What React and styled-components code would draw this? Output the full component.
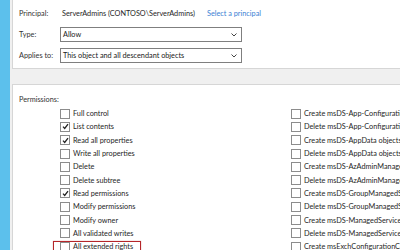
import React from "react";
import styled, { createGlobalStyle } from "styled-components";

const Global = createGlobalStyle`
  html, body {
    margin: 0;
    padding: 0;
    background: #f0f0f0;
    overflow: hidden;
  }
  body {
    font-family: Lato, "Noto Sans", sans-serif;
    font-size: 7.3px;
    color: #262626;
  }
`;

const Screen = styled.div`
  display: flex;
  width: 400px;
  height: 250px;
  overflow: hidden;
`;

const Strip = styled.div`
  width: 10px;
  flex: none;
  background: #5cc0ec;
`;

const Content = styled.div`
  flex: 1;
  padding-left: 2px;
  display: flex;
  flex-direction: column;
  min-width: 0;
`;

const Panel = styled.div`
  background: #ffffff;
  border: 1px solid #d6d6d6;
  border-right: none;
  border-top: ${(p) => (p.$first ? "none" : "1px solid #d6d6d6")};
  margin-top: ${(p) => (p.$first ? "0" : "15px")};
  padding: ${(p) => (p.$first ? "6px 0 5px 6px" : "8px 0 0 6px")};
  flex: ${(p) => (p.$first ? "none" : "1")};
`;

const FormGrid = styled.div`
  display: grid;
  grid-template-columns: 41px auto;
  grid-auto-rows: 15px;
  row-gap: 6px;
  align-items: center;
`;

const Label = styled.div`
  color: #333333;
  white-space: nowrap;
`;

const Value = styled.div`
  display: flex;
  align-items: center;
  gap: 12px;
  white-space: nowrap;
  padding-left: 2px;
`;

const Link = styled.span`
  color: #3b7fd4;
`;

const Select = styled.div`
  width: 174px;
  height: 13px;
  border: 1px solid #7f7f7f;
  display: flex;
  align-items: center;
  justify-content: space-between;
  padding: 0 4px 0 2px;
  color: #1a1a1a;
  white-space: nowrap;
`;

const Chevron = () => (
  <svg width="6" height="4" viewBox="0 0 6 4">
    <path d="M0.5 0.5 L3 3 L5.5 0.5" fill="none" stroke="#444" strokeWidth="1" />
  </svg>
);

const SectionTitle = styled.div`
  color: #333333;
  height: 13px;
  line-height: 13px;
  margin-bottom: 1px;
`;

const Columns = styled.div`
  display: grid;
  grid-template-columns: 231px 200px;
  margin-left: 41px;
`;

const List = styled.div`
  display: flex;
  flex-direction: column;
`;

const Row = styled.div`
  position: relative;
  height: 13.3px;
  display: flex;
  align-items: center;
  gap: 3px;
  white-space: nowrap;

  &::after {
    content: "";
    display: ${(p) => (p.$highlight ? "block" : "none")};
    position: absolute;
    left: -7px;
    top: 1px;
    width: 86px;
    height: 16px;
    border: 1px solid #b5262a;
    box-shadow: 0 0 1px rgba(181, 38, 42, 0.5);
  }
`;

const Box = styled.span`
  width: 8px;
  height: 8px;
  flex: none;
  border: 1px solid #8c8c8c;
  background: #ffffff;
  display: flex;
  align-items: center;
  justify-content: center;
`;

const Check = () => (
  <svg width="7" height="7" viewBox="0 0 7 7">
    <path d="M1 3.6 L2.7 5.4 L6 1.2" fill="none" stroke="#222" strokeWidth="1.3" />
  </svg>
);

const left = [
  ["Full control", false],
  ["List contents", true],
  ["Read all properties", true],
  ["Write all properties", false],
  ["Delete", false],
  ["Delete subtree", false],
  ["Read permissions", true],
  ["Modify permissions", false],
  ["Modify owner", false],
  ["All validated writes", false],
  ["All extended rights", false, true],
];

const right = [
  "Create msDS-App-Configuration objects",
  "Delete msDS-App-Configuration objects",
  "Create msDS-AppData objects",
  "Delete msDS-AppData objects",
  "Create msDS-AzAdminManager objects",
  "Delete msDS-AzAdminManager objects",
  "Create msDS-GroupManagedServiceAccount objects",
  "Delete msDS-GroupManagedServiceAccount objects",
  "Create msDS-ManagedServiceAccount objects",
  "Delete msDS-ManagedServiceAccount objects",
  "Create msExchConfigurationContainer objects",
];

function Item({ label, checked, highlight }) {
  return (
    <Row $highlight={highlight}>
      <Box>{checked && <Check />}</Box>
      <span>{label}</span>
    </Row>
  );
}

export default function App() {
  return (
    <>
      <Global />
      <Screen>
        <Strip />
        <Content>
          <Panel $first>
            <FormGrid>
              <Label>Principal:</Label>
              <Value>
                <span>ServerAdmins (CONTOSO\ServerAdmins)</span>
                <Link>Select a principal</Link>
              </Value>
              <Label>Type:</Label>
              <Select>
                <span>Allow</span>
                <Chevron />
              </Select>
              <Label>Applies to:</Label>
              <Select>
                <span>This object and all descendant objects</span>
                <Chevron />
              </Select>
            </FormGrid>
          </Panel>
          <Panel>
            <SectionTitle>Permissions:</SectionTitle>
            <Columns>
              <List>
                {left.map(([l, c, h]) => (
                  <Item key={l} label={l} checked={c} highlight={h} />
                ))}
              </List>
              <List>
                {right.map((l) => (
                  <Item key={l} label={l} checked={false} />
                ))}
              </List>
            </Columns>
          </Panel>
        </Content>
      </Screen>
    </>
  );
}
